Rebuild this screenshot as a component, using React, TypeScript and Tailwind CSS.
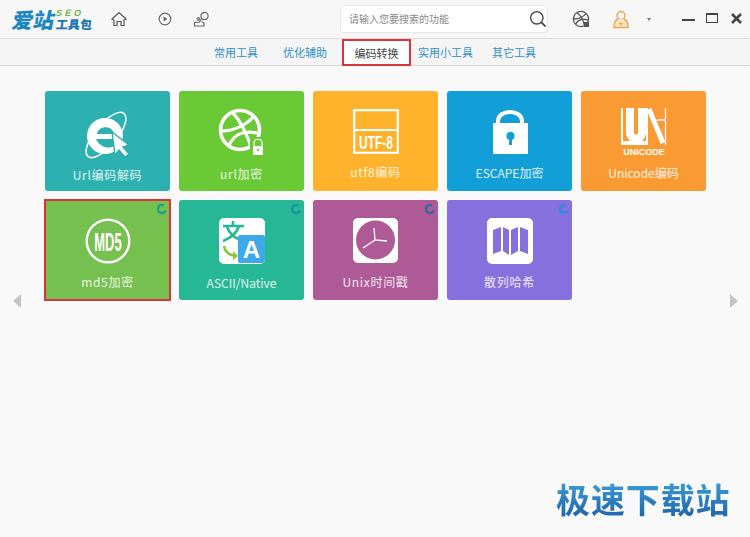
import React from "react";

const F = { fontFamily: '"Noto Sans CJK SC", "Liberation Sans", sans-serif' };

function IEIcon() {
  return (
    <svg width="50" height="50" viewBox="0 0 50 50" fill="none">
      <ellipse cx="23" cy="25" rx="28" ry="11" transform="rotate(-50 23 25)" stroke="#fff" strokeWidth="1.5" />
      <circle cx="22" cy="26" r="18" fill="#fff" />
      <path d="M14 24 C15 15 30 15 31 24 Z" fill="#2cb0b0" />
      <path d="M13 29 H41 V36 H31 C27 39 17 38 13 29 Z" fill="#2cb0b0" />
      <path d="M29 22 L46 35 L40 37 L46 44 L42 47 L36 40 L32 45 Z" fill="#fff" stroke="#2cb0b0" strokeWidth="1.4" />
    </svg>
  );
}

function BallIcon() {
  return (
    <svg width="50" height="50" viewBox="0 0 50 50" fill="none">
      <circle cx="23" cy="23" r="19.5" stroke="#fff" strokeWidth="3.6" />
      <path d="M15 5 C24 14 31 30 34 40" stroke="#fff" strokeWidth="3.2" />
      <path d="M5 24 C16 24 30 18 37 9" stroke="#fff" strokeWidth="3.2" />
      <path d="M12 39 C16 27 28 22 43 27" stroke="#fff" strokeWidth="3.2" />
      <rect x="33" y="30" width="16" height="19" fill="#69ca36" />
      <path d="M37 39 V36 C37 31 45 31 45 36 V39" stroke="#fff" strokeWidth="1.2" />
      <rect x="36" y="39" width="10" height="9" fill="#fff" />
      <circle cx="41" cy="43" r="1.2" fill="#69ca36" />
    </svg>
  );
}

function UtfIcon() {
  return (
    <svg width="46" height="46" viewBox="0 0 46 46" fill="none">
      <rect x="1.2" y="1.2" width="43.6" height="42.6" stroke="#fff" strokeWidth="2.2" />
      <path d="M1 21 H45" stroke="#fff" strokeWidth="2.2" />
      <text transform="translate(23 39.5) scale(1 1.6)" textAnchor="middle" fill="#fff" fontSize="12" fontWeight="700" style={{ fontFamily: '"Liberation Sans", sans-serif' }}>UTF-8</text>
    </svg>
  );
}

function LockIcon() {
  return (
    <svg width="36" height="46" viewBox="0 0 36 46" fill="none">
      <path d="M6 14 V12 C6 0 30 0 30 12 V14" stroke="#fff" strokeWidth="4" />
      <rect x="1" y="14" width="35" height="31" fill="#fff" />
      <circle cx="18.5" cy="27" r="4.2" fill="#129fd8" />
      <rect x="17" y="28" width="3" height="8" fill="#129fd8" />
    </svg>
  );
}

function UniIcon() {
  return (
    <svg width="46" height="48" viewBox="0 0 46 48" fill="none">
      <path d="M0 0 H2 V33 H0 Z" fill="#fff" />
      <path d="M0 33 H25 V37 H0 Z" fill="#fff" />
      <path d="M9 0 V24 C9 33 21 33 21 24 V0" stroke="#fff" strokeWidth="8" fill="none" />
      <path d="M26 0 V37" stroke="#fff" strokeWidth="2" />
      <path d="M28 1 L42 35" stroke="#fff" strokeWidth="5" />
      <path d="M44.5 0 V37 M36 12 H45" stroke="#fff" strokeWidth="1.3" />
      <text x="23" y="47" textAnchor="middle" fill="#fff" fontSize="9" fontWeight="700" style={{ fontFamily: '"Liberation Sans", sans-serif' }}>UNICODE</text>
    </svg>
  );
}

function Md5Icon() {
  return (
    <svg width="46" height="46" viewBox="0 0 46 46" fill="none">
      <circle cx="23" cy="23" r="21.3" stroke="#fff" strokeWidth="2.4" />
      <text transform="translate(23 33) scale(1 2)" textAnchor="middle" fill="#fff" fontSize="13" fontWeight="700" style={{ fontFamily: '"Liberation Sans", sans-serif' }}>MD5</text>
    </svg>
  );
}

function TransIcon() {
  return (
    <div className="w-[46px] h-[46px] rounded-[5px] bg-white overflow-hidden">
      <svg width="46" height="46" viewBox="0 0 46 46" fill="none">
        <rect x="19" y="17" width="27" height="28" rx="2" fill="#3ea9e8" />
        <text x="32.5" y="40" textAnchor="middle" fill="#fff" fontSize="24" fontWeight="700" style={{ fontFamily: '"Liberation Sans", sans-serif' }}>A</text>
        <path d="M4 8 H25 M14 3 V8 M20 8 C18 14 12 20 4 23 M8 9 C10 14 15 19 19 21" stroke="#24b795" strokeWidth="2.6" />
        <path d="M5 28 C6 34 10 37 16 38" stroke="#8cc63f" strokeWidth="2.6" />
        <path d="M14 33 L19 38 L14 42 Z" fill="#8cc63f" />
      </svg>
    </div>
  );
}

function ClockIcon() {
  return (
    <div className="w-[45px] h-[45px] rounded-[5px] bg-white">
      <svg width="45" height="45" viewBox="0 0 45 45" fill="none">
        <circle cx="22.5" cy="22" r="19.5" fill="#ad5a97" />
        <path d="M21 10 L22 22 L34 23 M22 22 L10 30" stroke="#fff" strokeWidth="1.3" />
      </svg>
    </div>
  );
}

function MapIcon() {
  return (
    <div className="w-[46px] h-[46px] rounded-[5px] bg-white">
      <svg width="46" height="46" viewBox="0 0 46 46" fill="#8570dd">
        <path d="M6 12 L14 9 V33 L6 36 Z" />
        <path d="M16 9 L22 12 V37 L16 33 Z" />
        <path d="M24 12 L31 9 V33 L24 37 Z" />
        <path d="M33 9 L41 12 V36 L33 33 Z" />
      </svg>
    </div>
  );
}

function Spinner({ color }: { color: string }) {
  return (
    <svg className="absolute top-[3px] right-[2px]" width="12" height="12" viewBox="0 0 12 12" fill="none">
      <circle cx="6" cy="6" r="4" stroke={color} strokeWidth="2.4" strokeDasharray="19 6.2" transform="rotate(20 6 6)" />
    </svg>
  );
}

type CardProps = {
  label: string;
  bg: string;
  icon: React.ReactNode;
  top: string;
  spinner?: string;
  selected?: boolean;
  labelCls: string;
};

function Card({ label, bg, icon, top, spinner, selected, labelCls }: CardProps) {
  return (
    <div className={`relative w-[125px] h-[100px] flex flex-col items-center ${bg} ${selected ? "outline-2 -outline-offset-1 outline-[#d8343a]" : "rounded-[3px]"}`}>
      <div className={`flex justify-center ${top}`}>{icon}</div>
      <div className={`absolute left-0 right-0 text-center text-[12px] leading-[16px] tracking-[0.7px] text-white/85 ${labelCls}`}>{label}</div>
      {spinner && <Spinner color={spinner} />}
    </div>
  );
}

export default function App() {
  return (
    <div className="w-[750px] h-[537px] relative overflow-hidden bg-[#f9f9f9]" style={F}>
      <header className="h-[39px] bg-[#f7f7f7] border-b border-[#dcdcdc] flex items-center">
        <div className="ml-[13px] w-[81px] flex items-end h-[22px]">
          <span className="text-[21px] leading-[22px] font-black text-[#1b86c2] -skew-x-12">爱站</span>
          <div className="flex flex-col items-start ml-[1px]">
            <span className="text-[9px] leading-[9px] font-bold text-[#6cbb3c] tracking-[3px] -skew-x-12" style={{ fontFamily: '"Liberation Sans", sans-serif' }}>SEO</span>
            <span className="text-[12px] leading-[12px] font-black text-[#1b76b4] -skew-x-6">工具包</span>
          </div>
        </div>
        <svg className="ml-[17px]" width="16" height="16" viewBox="0 0 16 16" fill="none" stroke="#555" strokeWidth="1.2">
          <path d="M1 8 L8 1.5 L15 8 L13 9 V14.5 H10 V10.5 H6 V14.5 H3 V9 Z" />
        </svg>
        <svg className="ml-[31px]" width="14" height="14" viewBox="0 0 14 14" fill="none" stroke="#666" strokeWidth="1.2">
          <circle cx="7" cy="7" r="5.8" />
          <path d="M5.6 4.5 L9.4 7 L5.6 9.5 Z" fill="#666" stroke="none" />
        </svg>
        <svg className="ml-[21px]" width="18" height="16" viewBox="0 0 18 16" fill="none" stroke="#666" strokeWidth="1.2">
          <circle cx="11.5" cy="5" r="3.6" />
          <path d="M8.6 7.5 L6.5 11 L1.5 11.5 L1.5 15 L11 15 L11 12 L8.5 10.5" />
          <circle cx="5.5" cy="8" r="2" fill="#888" stroke="none" />
        </svg>
        <div className="ml-[129px] w-[208px] h-[28px] bg-white border border-[#e8e8e8] rounded-[3px] flex items-center pl-[8px]">
          <span className="text-[10px] text-[#888] w-[180px] leading-[14px]">请输入您要搜索的功能</span>
          <svg width="18" height="18" viewBox="0 0 18 18" fill="none" stroke="#444" strokeWidth="1.4">
            <circle cx="7.8" cy="7.8" r="6.2" />
            <path d="M12.4 12.4 L16.6 16.6" strokeWidth="1.8" />
          </svg>
        </div>
        <svg className="ml-[24px]" width="18" height="18" viewBox="0 0 18 18" fill="none" stroke="#555" strokeWidth="1.3">
          <circle cx="9" cy="9" r="7.6" />
          <path d="M5 2.6 C9 6 11.5 11 12.5 15.5 M1.6 9 C6 9 11 7 14 3.6 M3.5 14.5 C5.5 10 10 8.5 16.4 10" />
          <rect x="12" y="12" width="5" height="5" fill="#555" stroke="none" />
        </svg>
        <svg className="ml-[23px]" width="16" height="19" viewBox="0 0 16 19" fill="none" stroke="#eea44a" strokeWidth="1.4">
          <circle cx="8" cy="5.5" r="4" />
          <path d="M5 9 C2 10 1 13 1 17.5 H15 C15 13 14 10 11 9" fill="#fbe5c4" />
          <path d="M5.5 13 H10.5 L8 15.5 Z" fill="#eea44a" stroke="none" />
        </svg>
        <div className="ml-[18px] w-0 h-0 border-l-[2.5px] border-r-[2.5px] border-t-[3px] border-l-transparent border-r-transparent border-t-[#777]" />
        <div className="ml-[31px] w-[13px] h-[2.5px] bg-[#444] mt-[2px]" />
        <div className="ml-[11px] w-[12px] h-[10px] border-[1.5px] border-t-[2.5px] border-[#444] mt-[-2px]" />
        <svg className="ml-[13px] mt-[-2px]" width="11" height="11" viewBox="0 0 11 11" stroke="#444" strokeWidth="2.6">
          <path d="M1 1 L10 10 M10 1 L1 10" />
        </svg>
      </header>

      <nav className="h-[27px] bg-[#f5f5f5] border-b border-[#d9d9d9] flex items-center text-[11px] text-[#2f8fd0]">
        <span className="ml-[214px] leading-[27px]">常用工具</span>
        <span className="ml-[25px] leading-[27px]">优化辅助</span>
        <span className="ml-[15px] w-[69px] h-[27px] border-2 border-[#d8343a] bg-white text-[#444] text-center leading-[24px] mt-[1px]">编码转换</span>
        <span className="ml-[7px] leading-[27px]">实用小工具</span>
        <span className="ml-[19px] leading-[27px]">其它工具</span>
      </nav>

      <main className="pl-[45px] pt-[25px] flex flex-col gap-[9px]">
        <div className="flex gap-[9px]">
          <Card label="Url编码解码" bg="bg-[#2cb0b0]" icon={<IEIcon />} top="pt-[19px]" labelCls="top-[76px]" />
          <Card label="url加密" bg="bg-[#69ca36]" icon={<BallIcon />} top="pt-[16px]" labelCls="top-[75px]" />
          <Card label="utf8编码" bg="bg-[#ffb32c]" icon={<UtfIcon />} top="pt-[18px]" labelCls="top-[73px]" />
          <Card label="ESCAPE加密" bg="bg-[#129fd8]" icon={<LockIcon />} top="pt-[18px]" labelCls="top-[74px] tracking-[0px]" />
          <Card label="Unicode编码" bg="bg-[#f99a33]" icon={<UniIcon />} top="pt-[17px]" labelCls="top-[74px] tracking-[0px]" />
        </div>
        <div className="flex gap-[9px]">
          <Card label="md5加密" bg="bg-[#76c050]" icon={<Md5Icon />} top="pt-[18px]" labelCls="top-[74px]" spinner="#1e9e8e" selected />
          <Card label="ASCII/Native" bg="bg-[#26b795]" icon={<TransIcon />} top="pt-[18px]" labelCls="top-[75px] tracking-[0px]" spinner="#1c8fa0" />
          <Card label="Unix时间戳" bg="bg-[#ad5a97]" icon={<ClockIcon />} top="pt-[18px]" labelCls="top-[74px]" spinner="#2a6aa8" />
          <Card label="散列哈希" bg="bg-[#8570dd]" icon={<MapIcon />} top="pt-[18px]" labelCls="top-[74px]" spinner="#2f8ae0" />
        </div>
      </main>

      <div className="absolute left-[13px] top-[294px] w-0 h-0 border-y-[7px] border-r-[8px] border-y-transparent border-r-[#c4c4c4]" />
      <div className="absolute left-[730px] top-[294px] w-0 h-0 border-y-[7px] border-l-[8px] border-y-transparent border-l-[#c4c4c4]" />

      <div className="absolute left-[556px] top-[477px] text-[34px] leading-[44px] font-bold tracking-[0.9px] whitespace-nowrap bg-gradient-to-b from-[#3fa3dc] to-[#1d5fa8] bg-clip-text text-transparent">极速下载站</div>
    </div>
  );
}
